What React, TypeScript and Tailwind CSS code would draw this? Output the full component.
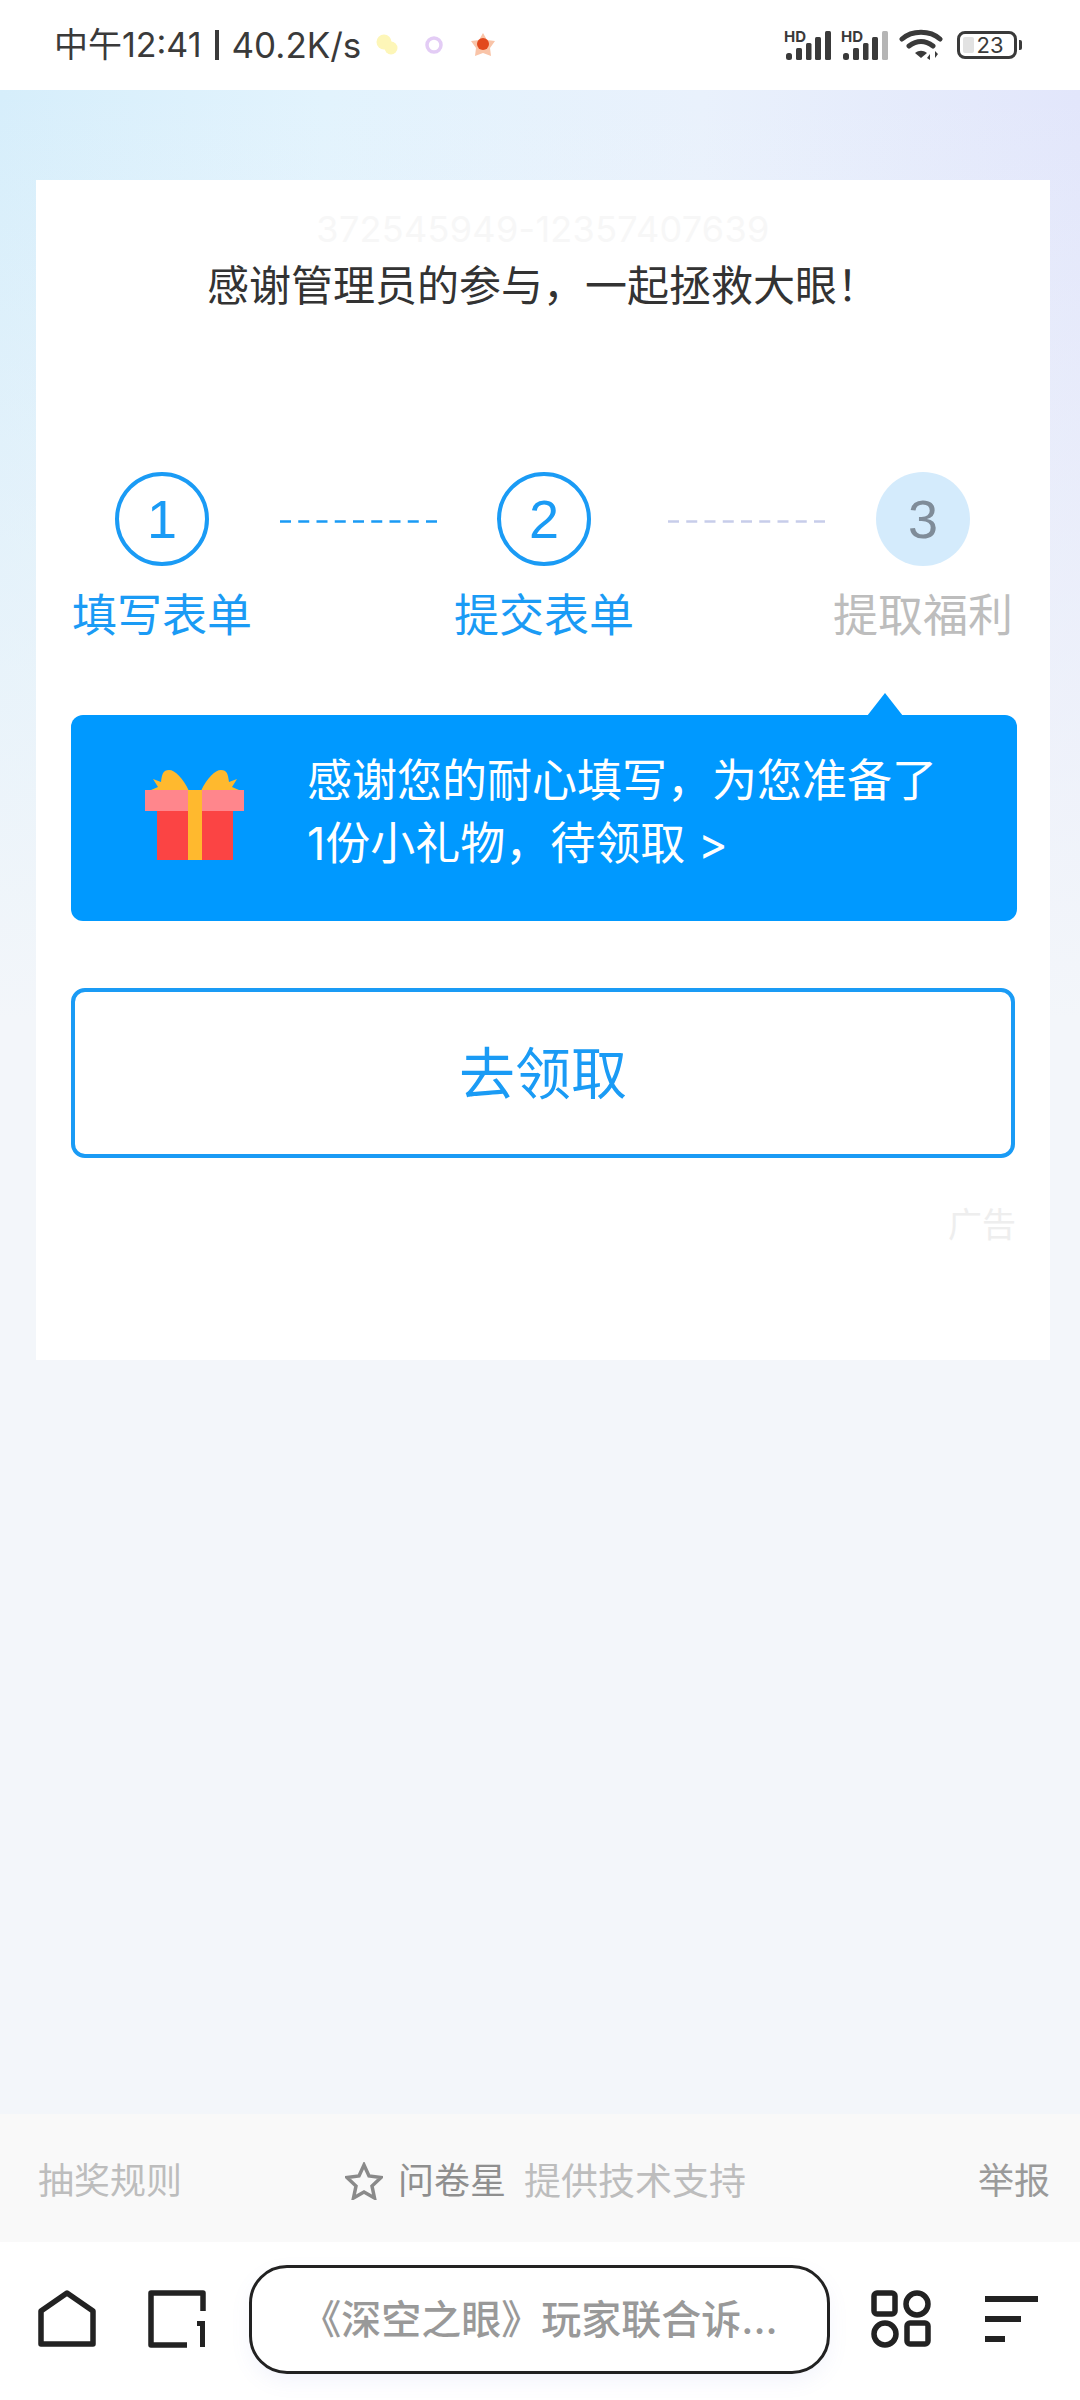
const cjk = "font-['Inter','Noto_Sans_CJK_SC',sans-serif]";

function Signal({ last }: { last: string }) {
  return (
    <svg width="47" height="30" viewBox="0 0 47 30" className="block overflow-visible">
      <text x="0" y="11.500" fontSize="15" fontWeight="700" fill="#3a3a3a" fontFamily="Inter, sans-serif">HD</text>
      <rect x="2" y="23" width="6" height="7" rx="2.500" fill="#3a3a3a" />
      <rect x="12" y="18" width="6" height="12" rx="1.500" fill="#3a3a3a" />
      <rect x="22" y="13" width="5.500" height="17" rx="1.500" fill="#3a3a3a" />
      <rect x="31" y="7" width="6" height="23" rx="1.500" fill="#3a3a3a" />
      <rect x="41" y="1" width="6" height="29" rx="1.500" fill={last} />
    </svg>
  );
}

function Step({ n, label, done }: { n: string; label: string; done: boolean }) {
  return (
    <div className="flex w-[200px] shrink-0 flex-col items-center">
      <div
        className={
          done
            ? "flex h-[94px] w-[94px] items-center justify-center rounded-full border-[4px] border-[#1a9bf5] bg-white font-['Liberation_Sans',sans-serif] text-[54px] leading-none text-[#1a9bf5]"
            : "flex h-[94px] w-[94px] items-center justify-center rounded-full bg-[#d4ebfc] font-['Liberation_Sans',sans-serif] text-[54px] leading-none text-[#7f8c99]"
        }
      >
        {n}
      </div>
      <div
        className={
          done
            ? "mt-[25px] whitespace-nowrap text-[45px] leading-[50px] text-[#1a9bf5]"
            : "mt-[25px] whitespace-nowrap text-[45px] leading-[50px] text-[#bdbdbd]"
        }
      >
        {label}
      </div>
    </div>
  );
}

function Dash({ color }: { color: string }) {
  return (
    <svg width="157" height="3" viewBox="0 0 157 3" className="mt-[48px] block shrink-0">
      <line x1="0" y1="1.500" x2="157" y2="1.500" stroke={color} strokeWidth="2.500" strokeDasharray="11 7.250" />
    </svg>
  );
}

export default function App() {
  return (
    <div className={`flex h-[2400px] w-[1080px] flex-col overflow-hidden bg-white ${cjk}`}>
      {/* status bar */}
      <div className="flex h-[90px] shrink-0 items-center justify-between bg-white pl-[54px] pr-[58px]">
        <div className="flex items-center">
          <span className="whitespace-nowrap text-[34px] leading-none text-[#3a3a3a]">中午12:41</span>
          <span className="ml-[13px] h-[30px] w-[4px] bg-[#3a3a3a]" />
          <span className="ml-[13px] whitespace-nowrap text-[35px] leading-none text-[#3a3a3a]">40.2K/s</span>
          <svg width="130" height="30" viewBox="0 0 130 30" className="ml-[9px] block">
            <circle cx="14" cy="12" r="7.500" fill="#fdf6b8" />
            <circle cx="21" cy="18" r="6.500" fill="#fdf6b8" />
            <circle cx="64" cy="15" r="7" fill="none" stroke="#e3ccf5" strokeWidth="3.500" />
            <path d="M113 3l4 7 8 1-5 7 1 8-8-3-8 3 1-8-5-7 8-1z" fill="#f9c4a8" />
            <circle cx="113" cy="14" r="6" fill="#e2491d" />
          </svg>
        </div>
        <div className="flex items-center">
          <Signal last="#3a3a3a" />
          <div className="ml-[10px]">
            <Signal last="#b5b5b5" />
          </div>
          <svg width="44" height="32" viewBox="0 0 44 32" className="ml-[11px] block">
            <path d="M3 10C13 1 31 1 41 10" fill="none" stroke="#3a3a3a" strokeWidth="5" strokeLinecap="round" />
            <path d="M10 17c8-6 16-6 24 0" fill="none" stroke="#3a3a3a" strokeWidth="5" strokeLinecap="round" />
            <path d="M16 24c4-3 8-3 12 0l-6 5z" fill="#3a3a3a" />
            <path d="M31 31v-6l-3 4zM36 22v7l3-4z" fill="#3a3a3a" />
          </svg>
          <div className="relative ml-[14px] flex h-[28px] w-[60px] items-center justify-center rounded-[8px] border-[3px] border-[#3a3a3a] text-[22px] leading-none text-[#3a3a3a]">
            <div className="absolute bottom-[3px] left-[3px] top-[3px] w-[11px] rounded-[2px] bg-[#e2e2e2]" />
            <span className="relative pl-[6px]">23</span>
          </div>
          <div className="ml-[2px] h-[10px] w-[3px] rounded-r-[2px] bg-[#3a3a3a]" />
        </div>
      </div>

      {/* page */}
      <div className="flex-1 bg-[linear-gradient(180deg,rgba(243,246,250,0)_0%,rgba(243,246,250,1)_46%),linear-gradient(90deg,#d6eefb_0%,#e2f3fd_30%,#e9f1fc_65%,#e2e6fb_100%)] px-[36px] pt-[90px]">
        <div className="h-[1180px] w-[1014px] bg-white pt-[26px]">
          <div className="text-center text-[36px] leading-[46px] tracking-[0.3px] text-[#f7f7f7]">372545949-12357407639</div>
          <div className="mt-[11px] text-center text-[42px] leading-[46px] text-[#333333]">感谢管理员的参与，一起拯救大眼！</div>

          {/* steps */}
          <div className="mt-[163px] flex justify-start pl-[26px]">
            <Step n="1" label="填写表单" done />
            <div className="ml-[18px] mr-[7px]"><Dash color="#1a9bf5" /></div>
            <Step n="2" label="提交表单" done />
            <div className="ml-[24px] -mr-[2px]"><Dash color="#c7cdea" /></div>
            <Step n="3" label="提取福利" done={false} />
          </div>

          {/* banner */}
          <div className="relative ml-[35px] mt-[74px] flex h-[206px] w-[946px] items-center rounded-[12px] bg-[#0099ff]">
            <div className="absolute -top-[22px] left-[796px] h-0 w-0 border-x-[18px] border-b-[23px] border-x-transparent border-b-[#0099ff]" />
            <svg width="100" height="92" viewBox="0 0 100 92" className="-mt-[4px] ml-[74px] block shrink-0">
              <path d="M44 21C38 8 30 0 24 0c-6 0-7 4-8 12L8 9l5 8-7 3z" fill="#ffb92e" />
              <path d="M56 21C62 8 70 0 76 0c6 0 7 4 8 12l8-3-5 8 7 3z" fill="#ffb92e" />
              <rect x="12" y="41" width="76" height="49" fill="#fb4444" />
              <rect x="0" y="20" width="99" height="21" fill="#ff868c" />
              <rect x="43" y="20" width="14" height="70" fill="#ffb92e" />
            </svg>
            <div className="-mt-[12px] ml-[62px] text-[45px] leading-[63px] text-white">
              <div className="whitespace-nowrap">感谢您的耐心填写，为您准备了</div>
              <div className="whitespace-nowrap">1份小礼物，待领取 &gt;</div>
            </div>
          </div>

          {/* button */}
          <div className="ml-[35px] mt-[67px] flex h-[170px] w-[944px] items-center justify-center rounded-[14px] border-[4px] border-[#1a9bf5] bg-white pt-[2px] text-[56px] leading-none text-[#1a9bf5]">
            去领取
          </div>

          <div className="mr-[34px] mt-[47px] text-right text-[34px] leading-[40px] text-[#eeeeee]">广告</div>
        </div>
      </div>

      {/* footer */}
      <div className="relative flex h-[128px] shrink-0 items-center justify-between bg-[#f9f9f9] pl-[38px] pr-[30px] pt-[6px] text-[36px] leading-none">
        <span className="text-[#bdbdbd]">抽奖规则</span>
        <span className="absolute bottom-0 left-[345px] top-[6px] flex items-center whitespace-nowrap">
          <svg width="38" height="38" viewBox="0 0 38 38" className="block">
            <path d="M19 3l5 11 12 1.500-9 8.500 2.500 12L19 30 8.500 36 11 24 2 15.500 14 14z" fill="none" stroke="#8a8a8a" strokeWidth="3.500" />
          </svg>
          <span className="ml-[15px] text-[#8f8f8f]">问卷星</span>
          <span className="ml-[18px] text-[37px] text-[#bdbdbd]">提供技术支持</span>
        </span>
        <span className="text-[#9a9a9a]">举报</span>
      </div>

      {/* browser nav */}
      <div className="flex h-[158px] shrink-0 items-center bg-white pb-[4px] pl-[38px]">
        <svg width="58" height="58" viewBox="0 0 58 58" className="block shrink-0">
          <path d="M3 54V21L29 3l26 18v33z" fill="none" stroke="#222222" strokeWidth="5.500" strokeLinejoin="round" />
        </svg>
        <svg width="58" height="58" viewBox="0 0 58 58" className="ml-[52px] block shrink-0">
          <path d="M55 21V3H3v52h36" fill="none" stroke="#222222" strokeWidth="5.500" strokeLinejoin="round" />
          <path d="M49 31h8v26h-5V36h-3z" fill="#222222" />
        </svg>
        <div className="ml-[43px] flex h-[109px] w-[581px] shrink-0 items-center justify-center rounded-[38px] border-[3px] border-[#222222] bg-white pt-[2px] text-[40px] font-medium leading-none text-[#999999] shadow-[0_8px_20px_rgba(120,130,220,0.08)]">
          <span className="whitespace-nowrap">《深空之眼》玩家联合诉...</span>
        </div>
        <svg width="60" height="58" viewBox="0 0 60 58" className="ml-[41px] block shrink-0">
          <g fill="none" stroke="#222222" strokeWidth="5.500">
            <rect x="3" y="3" width="21" height="21" rx="3" />
            <circle cx="46" cy="14" r="11" />
            <circle cx="14" cy="44" r="11" />
            <rect x="36" y="33" width="21" height="21" rx="3" />
          </g>
        </svg>
        <div className="ml-[54px] flex w-[53px] shrink-0 flex-col gap-[14px]">
          <div className="h-[6px] w-[53px] bg-[#222222]" />
          <div className="h-[6px] w-[36px] bg-[#222222]" />
          <div className="h-[6px] w-[20px] bg-[#222222]" />
        </div>
      </div>
    </div>
  );
}
